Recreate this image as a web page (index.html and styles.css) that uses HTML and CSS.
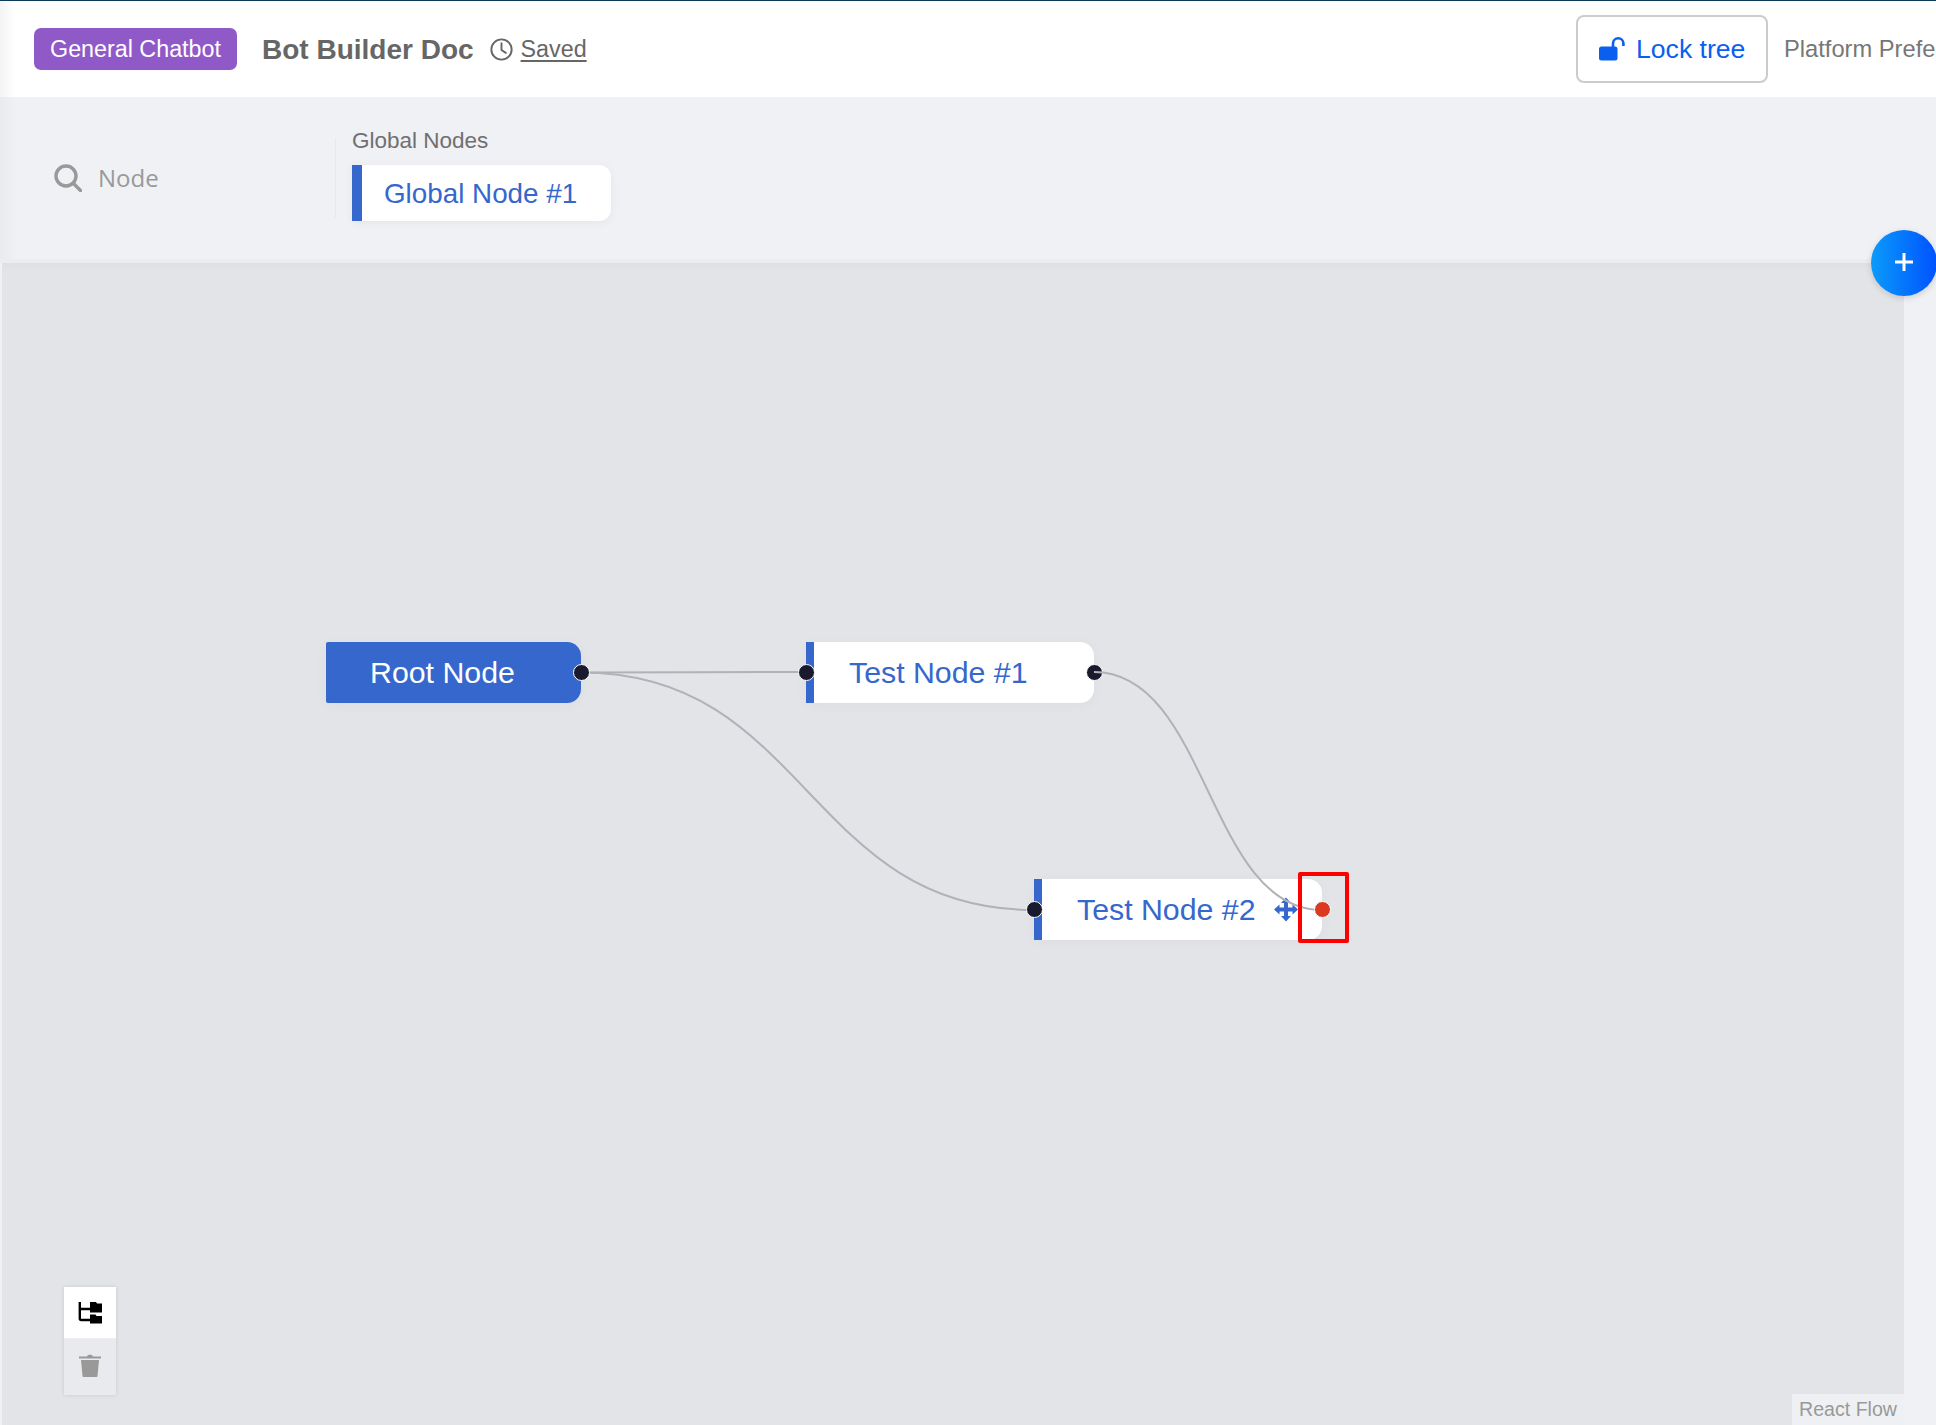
FILE: index.html
```html
<!DOCTYPE html>
<html lang="en">
<head>
<meta charset="utf-8">
<title>Bot Builder Doc</title>
<link rel="stylesheet" href="styles.css">
</head>
<body>
<div class="app">
  <header class="topbar">
    <span class="tag">General Chatbot</span>
    <h1 class="doc-title">Bot Builder Doc</h1>
    <svg class="clock" viewBox="0 0 24 24" fill="none" stroke="#666" stroke-width="2" stroke-linecap="round" stroke-linejoin="round"><circle cx="12" cy="12" r="10.6"/><path d="M12 5.5V12.5L16.5 15.5"/></svg>
    <a class="saved">Saved</a>
    <div class="topbar-right">
      <button class="lock-btn">
        <svg class="lock-icon" viewBox="0 0 26 24"><path fill="#0a5ff0" d="M2.5 9.5H16a2.5 2.5 0 0 1 2.5 2.5V21a2.5 2.5 0 0 1-2.5 2.5H2.5A2.5 2.5 0 0 1 0 21V12a2.5 2.5 0 0 1 2.5-2.5Z"/><path fill="none" stroke="#0a5ff0" stroke-width="2.6" d="M14 10V6.5a5.2 5.2 0 0 1 10.4 0V9"/></svg>
        <span>Lock tree</span>
      </button>
      <span class="prefs">Platform Preferences</span>
    </div>
  </header>
  <section class="toolbar">
    <div class="search">
      <svg class="search-icon" viewBox="0 0 28 28" fill="none" stroke="#999" stroke-width="3.4" stroke-linecap="round"><circle cx="12" cy="12" r="10"/><path d="M19.5 19.5L26.5 26.5"/></svg>
      <span class="search-text">Node</span>
    </div>
    <div class="divider"></div>
    <div class="globals">
      <div class="globals-label">Global Nodes</div>
      <div class="global-card">Global Node #1</div>
    </div>
  </section>
  <main class="canvas">
    <svg class="edges" viewBox="2 263 1902 1162" fill="none" stroke="#b1b1b7" stroke-width="2">
      <path d="M581 672.5C693.5 672.5 693.5 672 806 672"/>
      <path d="M581 672.5C807.5 672.5 807.5 910 1034 910"/>
    </svg>
    <div class="node root-node"><span class="label">Root Node</span><i class="handle handle-right"></i></div>
    <div class="node node-one"><span class="label">Test Node #1</span><i class="handle handle-left"></i></div>
    <div class="node node-two"><span class="label">Test Node #2</span><i class="handle handle-left"></i>
      <svg class="move-icon" viewBox="0 0 24 24" fill="#3567cd"><path d="M12 0L17 5.500H14V10H18.500V7L24 12L18.500 17V14H14V18.500H17L12 24L7 18.500H10V14H5.500V17L0 12L5.500 7V10H10V5.500H7Z"/></svg>
    </div>
    <i class="handle handle-free handle-one-out"></i>
    <i class="handle handle-free handle-two-out"></i>
    <svg class="edges" viewBox="2 263 1902 1162" fill="none" stroke="#b1b1b7" stroke-width="2">
      <path d="M1094 672C1208 672 1208 910 1322 910"/>
    </svg>
    <i class="handle handle-free handle-two-out"></i>
    <div class="highlight"></div>
    <div class="controls">
      <button class="ctrl ctrl-top">
        <svg class="tree-icon" viewBox="0 0 24 22"><path fill="none" stroke="#000" stroke-width="2.400" d="M1.800 0V16.500Q1.800 18 3.300 18H12M1.800 7H12"/><path fill="#000" d="M12 0H18L19 1.500H24V10.500H12ZM12 12.500H17.500L18.500 14H24.500V21.500H12Z"/></svg>
      </button>
      <button class="ctrl ctrl-bottom">
        <svg class="trash-icon" viewBox="0 0 22 24" fill="#999"><path d="M0 3.500H8C8.500 1 13.500 1 14 3.500H22V5.500H0ZM2 7H20L18.500 23A1 1 0 0 1 17.500 24H4.500A1 1 0 0 1 3.500 23Z"/></svg>
      </button>
    </div>
    <div class="attribution">React Flow</div>
  </main>
  <button class="fab"><svg class="plus" viewBox="0 0 18 18" stroke="#fff" stroke-width="3"><path d="M9 0V18M0 9H18"/></svg></button>
</div>
</body>
</html>
```
FILE: styles.css
```css
* { box-sizing: border-box; }
html, body { margin: 0; height: 100%; overflow: hidden; }
body { font-family: "Liberation Sans", Arial, sans-serif; background: #f0f1f5; }

.app { position: relative; width: 1936px; height: 1425px; display: flex; flex-direction: column; overflow: hidden; }

.topbar {
  height: 97px; flex: none; display: flex; align-items: center;
  padding: 1px 0 0 34px;
  border-top: 1px solid #0e3a5a;
  background: linear-gradient(to right, #f4f4f6 0, #fff 16px);
}
.tag {
  width: 203px; height: 42px; border-radius: 7px; background: #9059c8; color: #fff;
  font-size: 23.300px; line-height: 42px; text-align: center; flex: none; margin-top: -1px;
}
.doc-title { margin: 0 0 0 25px; font-size: 28px; font-weight: 700; color: #666; white-space: nowrap; }
.clock { width: 23px; height: 23px; margin-left: 16px; flex: none; }
.saved { margin-left: 8px; font-size: 23.300px; color: #666; text-decoration: underline; text-underline-offset: 3px; }
.topbar-right { margin-left: auto; display: flex; align-items: center; flex: none; width: 360px; height: 69px; margin-top: -1px; white-space: nowrap; overflow: hidden; }
.lock-btn {
  width: 192px; height: 68px; flex: none; background: #fff; border: 2px solid #ccc; border-radius: 8px;
  display: flex; align-items: center; padding: 0 0 0 21px; gap: 11px;
  font: 26.600px "Liberation Sans", Arial, sans-serif; color: #0a5ff0;
}
.lock-icon { width: 26px; height: 24px; flex: none; }
.prefs { margin-left: 16px; font-size: 23.700px; color: #777; }

.toolbar {
  height: 166px; flex: none; display: flex;
  padding-bottom: 4px;
  background: linear-gradient(to right, #e9eaee 0, #f0f1f5 16px);
  border-bottom: 4px solid #ebecee;
}
.search { width: 335px; padding: 67px 0 0 54px; display: flex; align-items: flex-start; gap: 16px; flex: none; }
.search-icon { width: 28px; height: 28px; flex: none; }
.search-text { font: 24px/28px "Open Sans", sans-serif; color: #999; }
.divider { width: 1px; height: 80px; margin-top: 41px; background: #e8e9ec; flex: none; }
.globals { margin: 31px 0 0 16px; }
.globals-label { font-size: 22.500px; line-height: 26px; color: #707070; }
.global-card {
  width: 259px; height: 56px; margin-top: 11px; padding-left: 22px;
  border-left: 10px solid #3567cd; border-radius: 0 12px 12px 0; background: #fff;
  box-shadow: 0 2px 10px rgba(0, 0, 0, .05);
  font-size: 27.800px; line-height: 57px; color: #3567cd;
}

.canvas {
  position: relative; flex: 1; margin: 0 32px 0 2px; background: #e3e4e8;
  box-shadow: inset 0 14px 12px -12px rgba(0, 0, 0, .03);
}
.edges { position: absolute; left: 0; top: 0; width: 1902px; height: 1162px; pointer-events: none; }

.node {
  position: absolute; height: 61px; line-height: 62px; font-size: 30.300px; white-space: nowrap;
  border-radius: 0 14px 14px 0; box-shadow: 0 2px 14px rgba(0, 0, 0, .03);
}
.root-node { left: 324px; top: 379px; width: 255px; padding-left: 44px; background: #3567cd; color: #fff; border-radius: 2px 14px 14px 2px; }
.node-one { left: 804px; top: 379px; width: 288px; padding-left: 35px; background: #fff; color: #3567cd; border-left: 8px solid #3567cd; }
.node-two { left: 1032px; top: 616px; width: 288px; padding-left: 35px; background: #fff; color: #3567cd; border-left: 8px solid #3567cd; }

.handle {
  position: absolute; width: 17px; height: 17px; border-radius: 50%;
  background: #1a1a2e; border: 1.500px solid #fff;
}
.handle-left { left: -16.500px; top: 21.500px; }
.handle-right { right: -8.500px; top: 21.500px; }
.handle-free { right: auto; }
.handle-one-out { left: 1083.500px; top: 400.500px; }
.handle-two-out { left: 1311.500px; top: 638px; background: #dc3a20; }

.move-icon { position: absolute; left: 232px; top: 18px; width: 24px; height: 25px; }

.highlight {
  position: absolute; left: 1296px; top: 609px; width: 51px; height: 71px;
  border: 4px solid #f00; border-radius: 2px;
}

.controls {
  position: absolute; left: 62px; top: 1024px; width: 52px; height: 108px;
  display: flex; flex-direction: column; background: #e9eaed;
  box-shadow: 0 0 4px rgba(0, 0, 0, .12);
}
.ctrl { height: 52px; flex: none; border: 0; padding: 0; display: flex; align-items: center; justify-content: center; background: #e9eaed; }
.ctrl-top { background: #fff; border-bottom: 1px solid #eee; }
.tree-icon { width: 24px; height: 22px; }
.trash-icon { width: 22px; height: 24px; }

.attribution {
  position: absolute; right: 0; bottom: 0; width: 112px; height: 31px;
  padding-left: 7px; background: #eff0f3; color: #999; font-size: 19.600px; line-height: 31px; white-space: nowrap;
}

.fab {
  position: absolute; left: 1871px; top: 230px; width: 66px; height: 66px; border: 0; border-radius: 50%; padding: 0;
  background: linear-gradient(to right, #0a9bfa, #0052ff);
  box-shadow: 0 2px 6px rgba(0, 0, 0, .15);
  display: flex; align-items: center; justify-content: center;
}
.plus { width: 18px; height: 18px; margin-top: -3px; }
```
